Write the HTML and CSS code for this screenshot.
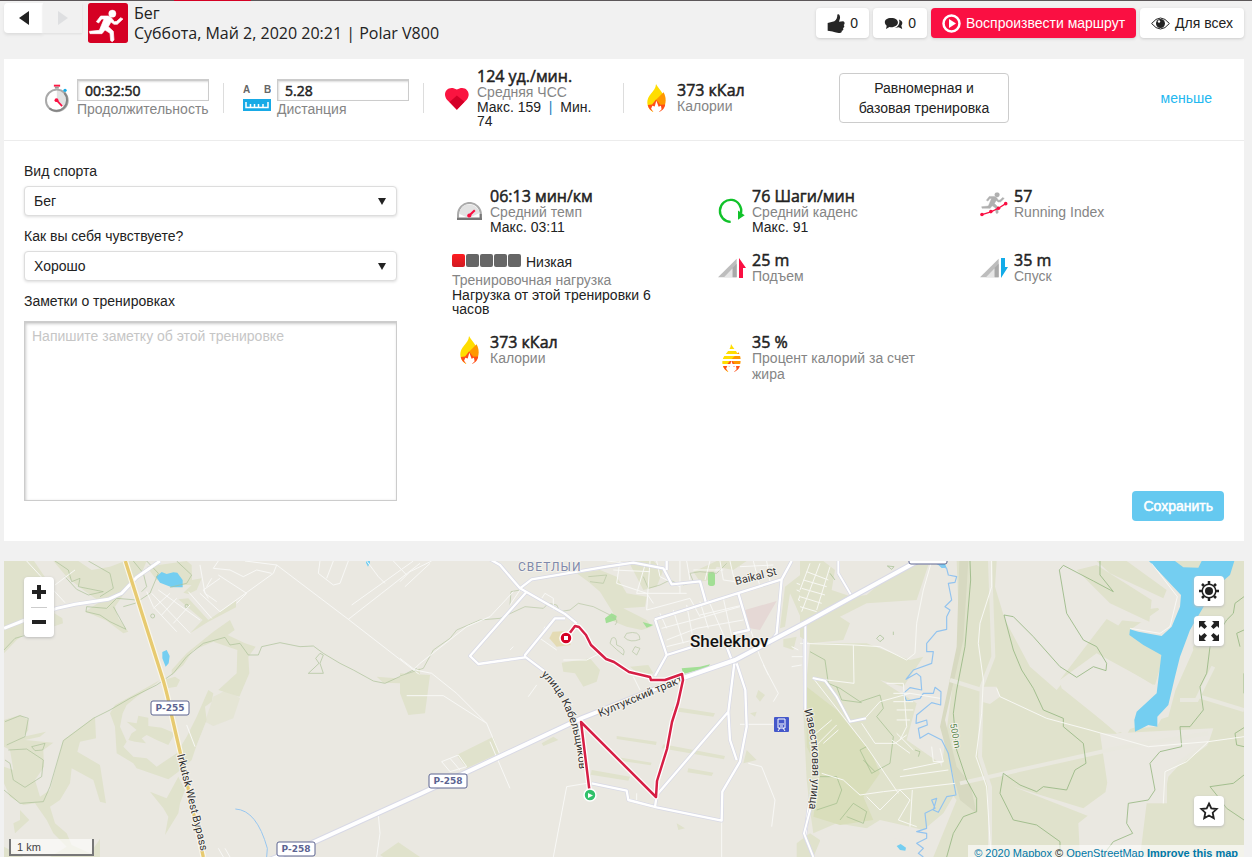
FILE: index.html
```html
<!DOCTYPE html>
<html lang="ru">
<head>
<meta charset="utf-8">
<meta name="viewport" content="width=device-width, initial-scale=1">
<title>Бег – Polar V800</title>
<link rel="stylesheet" href="styles.css">
</head>
<body>
<svg class="defs" aria-hidden="true">
  <symbol id="flame" viewBox="653 102 57 85">
    <path fill="#fd0" d="M680 102C688 117 706 130 704 150L686 170 670 187 662 180C649 165 652 145 664 132 673 122 679 115 680 102Z"/>
    <path fill="#ff9800" d="M703 127C713 145 711 168 698 180L680 187 672 170 680 150Z"/>
    <path fill="#ff4e17" d="M680 149L693 165 708 164C706 177 698 184 688 187H676C664 184 657 177 655 166L668 164Z"/>
    <path fill="#fff" d="M681 153L676 170 669 168 665 177 673 188H688L697 179 695 168 688 171Z"/>
  </symbol>
  <symbol id="slope" viewBox="835 234 57 58">
    <path fill="#bdbdbd" d="M835 291L891 235V291Z"/><path fill="#e6e6e6" d="M853 291L879 264V291Z"/><path fill="#a9a9a9" d="M879 262L891 250V291H879Z"/>
  </symbol>
  <symbol id="runner" viewBox="264 26 108 103">
    <circle cx="337" cy="41" r="11"/><path d="M302 48L325 48 334 53 343 65 350 64 362 53 369 57 352 73 342 73 333 66 325 80 340 94 342 120 337 125 332 122 330 100 315 90 306 101 270 101 268 94 298 91 312 57 305 57 296 69 289 65Z" stroke-width="2" stroke-linejoin="round"/>
  </symbol>
</svg>
<div class="page">
  <div class="topline"><span class="topline-active"></span></div>
  <header class="header">
    <div class="pager">
      <button class="pager-btn" aria-label="Назад"><svg width="10" height="14" viewBox="0 0 10 14"><path d="M10 0V14L0 7Z" fill="#222"/></svg></button>
      <button class="pager-btn pager-off" aria-label="Вперёд" disabled><svg width="10" height="14" viewBox="0 0 10 14"><path d="M0 0V14L10 7Z" fill="#dedfe1"/></svg></button>
    </div>
    <svg class="sport" viewBox="264 9 120 120" width="40" height="40"><rect x="264" y="9" width="120" height="120" rx="8" fill="#d50023"/><use href="#runner" x="264" y="26" width="108" height="103" fill="#fff" stroke="#fff"/></svg>
    <h1 class="title">Бег<br>Суббота, Май 2, 2020 20:21 | Polar V800</h1>
    <div class="actions">
      <button class="btn"><svg width="18" height="19" viewBox="82 42 54 57"><path fill="#262626" d="M84 69L104 64C111 58 113 53 113 44 118 39 122 47 121 55L118 65 130 64C136 65 136 73 132 75 136 80 133 84 130 84 133 90 129 93 126 92 128 98 122 99 117 99 105 98 100 94 94 94L84 92Z"/></svg>0</button>
      <button class="btn"><svg width="19" height="13" viewBox="254 51 56 36"><path fill="#262626" d="M275 53C288 53 295 59 295 66S288 80 274 80L270 79 260 85 262 76C251 66 257 53 275 53Z M298 57C308 60 311 68 305 76L308 85 297 80 286 82C297 77 302 68 298 57Z"/></svg>0</button>
      <button class="btn btn-red"><svg width="19" height="19" viewBox="0 0 19 19"><circle cx="9.500" cy="9.500" r="8" fill="none" stroke="#fff" stroke-width="2.500"/><path d="M7 5L14 9.500 7 14Z" fill="#fff"/></svg>Воспроизвести маршрут</button>
      <button class="btn"><svg width="19" height="13" viewBox="0 0 19 13"><path d="M.6 6.500Q9.500-4.500 18.400 6.500 9.500 17.500.6 6.500Z" fill="#fff" stroke="#222"/><circle cx="9.500" cy="6.500" r="4.500" fill="#222"/><circle cx="8" cy="4.500" r="1.200" fill="#fff"/></svg>Для всех</button>
    </div>
  </header>

  <main class="panel">
    <section class="summary">
      <div class="cell">
        <svg class="cell-icon" width="24" height="29" viewBox="135 250 73 88"><circle cx="171" cy="300" r="32" fill="#fff"/><path fill="#e2e2e2" d="M171 300V268A32 32 0 0 1 194 323Z"/><circle cx="171" cy="300" r="33" fill="none" stroke="#a9a9a9" stroke-width="6"/><path d="M194 277A33 33 0 0 1 148 324" fill="none" stroke="#858585" stroke-width="6"/><path fill="#ff1744" d="M162 252H181V258H162Z"/><path fill="#999" d="M165 258H177V264H165Z"/><circle cx="196" cy="269" r="5" fill="#13abe8"/><circle cx="170" cy="299" r="6" fill="#fa0f42"/><path d="M170 299L187 317" stroke="#fa0f42" stroke-width="5"/></svg>
        <div class="cell-body"><input class="metric-input" id="dur" value="00:32:50"><label class="label" for="dur">Продолжительность</label></div>
      </div>
      <div class="cell">
        <svg class="cell-icon" width="28" height="26" viewBox="0 0 28 26"><text x="0" y="8" class="ab">A</text><text x="21" y="8" class="ab">B</text><path fill="#18aae6" d="M0 14H28V26H0Z"/><path d="M3 17V22.500H25V17 M7.500 19V23 M11.500 19V23 M15.500 19V23 M20 19V23" fill="none" stroke="#fff" stroke-width="1.500"/></svg>
        <div class="cell-body"><input class="metric-input" id="dist" value="5.28"><label class="label" for="dist">Дистанция</label></div>
      </div>
      <div class="cell">
        <svg class="cell-icon" width="24" height="23" viewBox="45 110 73 68"><path fill="#fa1440" d="M81 178L51 148C34 126 56 101 81 117 106 101 128 126 111 148Z"/><path fill="#d40028" d="M81 135L104 154 81 178 59 155Z"/></svg>
        <div class="cell-body"><div class="value">124 уд./мин.</div><div class="label">Средняя ЧСС</div><div class="extra">Макс. 159 &nbsp;<span class="bar">|</span>&nbsp; Мин. 74</div></div>
      </div>
      <div class="cell">
        <svg class="cell-icon" width="19" height="28"><use href="#flame"/></svg>
        <div class="cell-body"><div class="value">373 кКал</div><div class="label">Калории</div></div>
      </div>
      <div class="benefit"><button class="outline-btn">Равномерная и базовая тренировка</button></div>
      <a class="less" href="#">меньше</a>
    </section>

    <section class="details">
      <form class="form">
        <label class="field-label" for="sport">Вид спорта</label>
        <div class="select-wrap"><select class="select" id="sport"><option>Бег</option></select></div>
        <label class="field-label" for="feel">Как вы себя чувствуете?</label>
        <div class="select-wrap"><select class="select" id="feel"><option>Хорошо</option></select></div>
        <label class="field-label" for="notes">Заметки о тренировках</label>
        <textarea class="notes" id="notes" placeholder="Напишите заметку об этой тренировке"></textarea>
      </form>
      <div class="side">
        <div class="stats">
          <div class="stat"><div class="stat-icon"><svg width="25" height="18" viewBox="54 66 73 52"><path fill="#fff" stroke="#aaa" stroke-width="6" d="M57 114V103A33 34 0 0 1 124 103V114Z"/><path fill="#e2e2e2" d="M90 114L60 100Q65 72 90 73 115 75 120 98L90 112Z"/><path stroke="#777" stroke-width="6" d="M54 115H127M123 114V101"/><path d="M86 109L106 90" stroke="#fa0f42" stroke-width="6"/><circle cx="90" cy="105" r="6" fill="#fa0f42"/></svg></div>
            <div><div class="value">06:13 мин/км</div><div class="label">Средний темп</div><div class="extra">Макс. 03:11</div></div></div>
          <div class="stat"><div class="stat-icon"><svg width="27" height="26" viewBox="838 55 81 77"><path fill="none" stroke="#11c22a" stroke-width="7" d="M876 126A32 33 0 1 1 907 100"/><path fill="#11c22a" d="M898 92L918 106 898 120Z"/></svg></div>
            <div><div class="value">76 Шаги/мин</div><div class="label">Средний каденс</div><div class="extra">Макс. 91</div></div></div>
          <div class="stat"><div class="stat-icon stat-icon-top"><svg width="28" height="26" viewBox="420 30 85 78"><use href="#runner" x="422" y="31" width="74" height="70" fill="#b0b0b0" stroke="#b0b0b0"/><path d="M426 101L453 93 476 82 498 68" fill="none" stroke="#fa0f42" stroke-width="4"/><g fill="#fa0f42"><circle cx="426" cy="101" r="5.500"/><circle cx="453" cy="92" r="5.500"/><circle cx="476" cy="82" r="5.500"/><circle cx="498" cy="68" r="5.500"/></g></svg></div>
            <div><div class="value">57</div><div class="label">Running Index</div></div></div>

          <div class="load"><div class="load-row"><span class="sq sq-on"></span><span class="sq"></span><span class="sq"></span><span class="sq"></span><span class="sq"></span><span class="load-text">Низкая</span></div><div class="label">Тренировочная нагрузка</div><div class="extra">Нагрузка от этой тренировки 6 часов</div></div>
          <div class="stat"><div class="stat-icon stat-icon-top"><svg width="28" height="20" viewBox="0 0 28 20"><use href="#slope" width="19" height="20"/><path fill="#fa0f42" d="M21 0L28 10H25V20H21Z"/></svg></div>
            <div><div class="value">25 m</div><div class="label">Подъем</div></div></div>
          <div class="stat"><div class="stat-icon stat-icon-top"><svg width="28" height="20" viewBox="0 0 28 20"><use href="#slope" width="19" height="20"/><path fill="#13abe8" d="M21 0H25V9H28L21 20Z"/></svg></div>
            <div><div class="value">35 m</div><div class="label">Спуск</div></div></div>

          <div class="stat"><div class="stat-icon stat-icon-top"><svg width="19" height="28"><use href="#flame"/></svg></div>
            <div><div class="value">373 кКал</div><div class="label">Калории</div></div></div>
          <div class="stat"><div class="stat-icon"><svg width="19" height="28" viewBox="0 0 19 28"><use href="#flame" width="19" height="28"/><path stroke="#fff" stroke-width="2" d="M0 6H21M0 11H21M0 16H21M0 21H21"/></svg></div>
            <div><div class="value">35 %</div><div class="label">Процент калорий за счет жира</div></div></div>
        </div>
        <button class="save">Сохранить</button>
      </div>
    </section>
  </main>

  <section class="map" aria-label="Карта маршрута">
    <svg class="map-canvas" viewBox="4 561 1240 300" preserveAspectRatio="xMinYMin slice">
      <rect x="4" y="561" width="3000" height="1000" fill="#eae8e1"/>

      <!-- western area -->
      <g transform="translate(0 550) scale(.33333)">
        <g fill="#e0e2cc">
          <path d="M12 33H102L135 82 160 125 163 190 187 205 189 220 150 233 90 240 50 270 12 310Z M12 150L25 205 12 220Z M160 33H235L275 60 330 50 375 33H440L420 80 380 120 345 170 355 205 385 245 370 250 320 212 280 195 255 185 300 155 250 120 200 80Z M440 50L560 33 575 45 576 90 605 85 590 120 565 132 550 128 575 105 520 105 470 90Z M535 148L565 145 625 210 690 165 708 152 708 172 625 215 570 250 608 210Z"/>
          <path d="M515 360L560 310 640 245 690 210 704 240 683 255 735 280 767 290 745 320 748 370 718 440 655 420 710 370 712 300 640 275 580 300 550 345 515 375Z"/>
          <path d="M330 490L345 465 400 435 480 390 470 400 410 440 380 465 368 490 360 530 380 575 370 590 400 620 440 625 470 650 530 610 560 560 590 500 625 420 640 430 635 455 615 470 620 510 590 585 575 630 535 665 505 688 410 655 400 640 350 610 345 530Z M380 515L410 520 415 497 445 503 445 528 485 533 525 550 505 585 470 570 440 555 425 565 438 580 405 575 385 570 395 550 410 540Z M525 380L540 390 530 410 500 415 490 390Z"/>
          <path d="M12 510L60 495 85 510 85 540 70 560 138 545 120 560 75 570 160 578 130 600 132 650 105 690 120 740 150 720 190 570 285 500 288 565 240 575 232 605 300 645 318 760 300 755 280 690 215 655 210 700 180 750 150 770 165 820 200 850 215 885 270 910 300 867 300 921H150L200 890 160 850 140 810 105 760 70 765 30 740 12 700V650L40 660 30 600 12 590Z M60 780L88 810 45 850 40 820 60 810Z M450 725L500 745 535 680 555 720 540 760 535 790 495 855 505 800 490 775Z M12 890L70 921H12Z M1130 380L1190 385 1260 355V490H1225L1200 400 1150 398Z M1140 915L1195 877 1260 921H1150Z"/>
          <path opacity=".55" d="M640 440L680 420 720 445 700 505 640 528 615 515Z"/>
        </g>
        <g fill="#74cef1"><path d="M468 80L485 66 500 72 520 67 532 68 548 90V112H515L480 98Z M487 306L500 300 509 318 506 340 497 350 487 325Z M1098 33H1110V38L1104 50 1098 38Z"/></g>
        <g fill="none" stroke="#a9bf96" stroke-width="2">
          <path d="M165 33L205 60 215 95 240 85 235 110 310 125 265 135 230 118 195 80 M265 33L330 70 340 115 300 140 M410 150L350 145 320 175 260 170 258 185 300 195 330 215 378 238 340 170 M400 33L430 70 440 110 425 125 M440 33L475 70 450 130 405 160 370 170 M530 33L575 75 560 100 510 112"/>
          <path d="M12 720L60 760 130 755 150 710 190 572 280 505 330 480 390 445 470 405 520 370 560 320 610 280 675 262 690 285 720 280 745 315H775L785 290 840 278 900 290 940 288 970 310 1020 340 1060 360 1120 393 1155 400 1210 375 1250 355"/>
          <path d="M960 310L947 325 957 340 925 370H970L960 340 970 315Z M15 515L60 497 85 505 75 560 20 585 M25 600L80 597 130 630 125 680 75 712 40 690 30 640 15 630 M95 590L135 580 128 600 105 602Z M12 300L45 265 80 255"/>
          <circle cx="458" cy="198" r="6"/><circle cx="560" cy="168" r="5"/>
        </g>
        <path d="M706 777Q770 780 802 895L800 921" fill="none" stroke="#97c6f0" stroke-width="3"/>
        <g fill="none" stroke="#f8f8f6" stroke-width="3">
          <path d="M80 33L195 158 M165 105L225 60 M735 33L830 45 1045 208 1260 375 M830 45L820 70 660 185 M600 45L615 130 650 155 M655 33L640 55 690 60 730 80 770 60 815 70 M635 85L620 110 M655 75L740 130 710 160 M600 130L660 185 M565 125L635 205 M660 85L610 120 625 145 M1055 165L1240 33 M1045 208L1145 130 1260 40 M960 33L955 70 1000 105 1020 100 1045 33 M1000 33L980 85 M1100 33L1135 80 1155 100 M1180 33L1220 75"/>
          <path d="M440 125L460 170 530 245 M455 130L570 250 M475 120L600 210 M510 130L460 175 M530 145L485 195 M570 165L520 220 M560 525L585 590 M655 895L670 921 M675 895L690 921 M1135 795L1140 850 1130 921 M1220 438H1260"/>
        </g>
        <path d="M12 235L75 210 170 175 225 163 325 148 365 130 410 82 480 33" fill="none" stroke="#d8d9e4" stroke-width="13"/>
        <path d="M12 235L75 210 170 175 225 163 325 148 365 130 410 82 480 33" fill="none" stroke="#fff" stroke-width="9"/>
        <path d="M376 33L490 392Q505 445 510 475L540 605 L610 921" fill="none" stroke="#faf7ea" stroke-width="17"/>
        <path d="M376 33L490 392Q505 445 510 475L540 605 L610 921" fill="none" stroke="#e7ca70" stroke-width="10"/>
      </g>

      <!-- town -->
      <g transform="translate(400 550) scale(.33333)">
        <g fill="#e0e2cc">
          <path d="M0 370L90 375 75 490 25 495 0 430Z M530 70L600 60 650 80 680 130 740 140 735 170 670 175 740 210 755 230 725 240 680 230 630 210 640 190 600 125 565 95Z M685 33H760L790 60 770 110 730 120Z M950 33L1040 33 1000 60 950 50 930 90 900 95 880 65Z M1220 60L1260 33V240L1210 220 1170 130 1155 230 1140 235 1155 110Z M485 338L570 325 600 360 590 395 550 410 525 370 490 365Z M690 350L745 345 760 370 720 375Z M170 615L280 560 298 610 200 655Z M425 580L460 560 475 570 430 588Z"/>
          <path d="M650 558L770 575 768 585 650 567Z M820 470L945 490 940 500 815 482Z M790 583L975 618 972 628 785 595Z M655 622L755 638 752 646 648 630Z M575 660L690 680 685 692 572 674Z M865 655L940 668 935 678 862 667Z M1075 420L1095 435 1080 455 1068 440Z M1040 600L1070 630 1030 640Z M830 820L855 835 835 840Z M1190 880L1230 850 1260 870V921H1190Z M0 880L25 921H0Z M1050 490L1070 485 1065 500Z M1150 268L1190 260 1180 300 1150 290Z"/>
        </g>
        <path fill="#e5d8d5" d="M1035 180L1130 153 1080 240 1050 235Z"/><path fill="#e4dbb4" d="M458 245L500 243 512 285 470 290 448 265Z"/>
        <path fill="#a2df95" d="M615 205L635 190 650 198 648 210 618 220Z M845 355L900 350 930 343 925 352 850 372Z M728 216L760 225 740 233Z"/><rect x="924" y="66" width="21" height="42" rx="8" fill="#a2df95"/>
        <g fill="none" stroke="#b5c5a2" stroke-width="2">
          <path d="M0 378L70 355 100 300 150 265 170 240 240 210 300 205 375 170 430 175 445 160 470 165 480 185 510 180 535 160 580 170 630 195 M360 120L333 125 330 165 M565 80L620 75 610 100 570 95 M730 80L745 115 780 105 810 90 840 105 M850 105L880 95 870 70 900 65 950 70 980 40 M680 250Q720 240 720 268 690 280 673 262Z M635 265Q650 255 650 285 680 295 670 315 650 300 630 280Z M705 290L720 295 710 315 697 305Z M635 200Q660 210 645 225"/>
        </g>
        <g fill="none" stroke="#f8f8f6" stroke-width="3">
          <path d="M0 325L45 360 95 370 170 430 260 520 298 610 M20 437H130L260 520 M40 360L60 340 200 230 270 200 340 125 M0 95L30 65 95 33 M15 110L90 40 M330 165L360 120 375 130 M425 145L435 130 460 145 460 180 M435 230L420 265 470 300 M490 330H560L600 310 M385 440L410 405 M330 300L340 290 M125 635L175 615 200 650 150 665Z M150 625L180 660 M270 575L330 715 M460 921L500 710 560 700 M965 815V921 M700 380L720 420 M710 730V755 M1045 640L1085 650 1125 750 1115 830 M1020 523H1120 M1050 235L1080 320 1105 375 M1090 345L1135 430 1120 455 M1175 290L1195 300 M1175 320H1210 M1175 350L1205 345 M1235 375L1260 390"/>
          <path d="M620 33L735 45 710 130 860 130 M640 60L750 65 M660 33L650 100 740 130 760 160 M750 33L740 180 760 175 870 145 900 200 M770 33L780 80 840 110 M840 33V130 M860 33L870 90 M880 60H970 M930 33L915 90 M960 33L970 90 1040 100 M990 33L1005 100 M1020 50L1120 45 M1060 33L1080 110 M1100 33L1110 95 M780 190L800 235 M820 180L850 280 M860 165L880 270 M900 155L925 235 M925 150L990 300 M970 145L1000 280 M785 235L880 210 1020 170 M800 270L890 235 1030 210 M800 290L880 270 M900 195L1030 165"/>
          <path d="M1200 70L1260 100 M1190 100L1260 125 M1190 120L1260 150 M1195 150L1260 175 M1235 50L1195 150 M1260 50L1210 190 M1225 80L1250 120"/>
        </g>
        <g fill="none" stroke-linejoin="round">
          <path stroke="#d8d9e6" stroke-width="11" d="M270 28L300 45 360 115 495 192 530 220 M360 115L395 88 620 50 700 38 790 55 815 103 900 94 917 155 M380 125L210 318 235 342 375 322 375 315 465 205H495 M375 320L435 365 M765 208L1145 88 1175 33 M765 208L800 315 765 378 M800 315L880 290 M1145 88L1130 250 1105 285 M1015 130L1047 240 1000 250 M980 290L995 330 M1010 340L1036 420 1040 530 1020 635 967 725 965 812 770 772 685 750 680 722 575 700 M765 772L770 735 985 485 M1003 340L985 485 990 570 1010 630 M800 28V60 M1213 220L1215 470 1235 700 1215 860 1240 921"/>
          <path stroke="#fff" stroke-width="7" d="M270 28L300 45 360 115 495 192 530 220 M360 115L395 88 620 50 700 38 790 55 815 103 900 94 917 155 M380 125L210 318 235 342 375 322 375 315 465 205H495 M375 320L435 365 M765 208L1145 88 1175 33 M765 208L800 315 765 378 M800 315L880 290 M1145 88L1130 250 1105 285 M1015 130L1047 240 1000 250 M980 290L995 330 M1010 340L1036 420 1040 530 1020 635 967 725 965 812 770 772 685 750 680 722 575 700 M765 772L770 735 985 485 M1003 340L985 485 990 570 1010 630 M800 28V60 M1213 220L1215 470 1235 700 1215 860 1240 921"/>
        </g>
      </g>

      <!-- river and eastern hills -->
      <g transform="translate(800 480) scale(.33333)">
        <path fill="#e0e2cc" d="M0 243H70L105 270 95 330 155 350 200 345 240 310 330 255H385L350 360 200 370 120 410 150 430 130 480 30 490 0 470Z M470 243H790L830 320 840 360 920 417 778 600 785 625 935 745 980 765 1060 620 930 550 895 520 985 395 1100 380 1145 330 1050 243H1332V1131H400L470 960 420 900 460 600 480 510Z"/>
        <path fill="#e0e2cc" d="M30 490L200 490 330 540 370 530 310 620 240 600 350 670 320 780 420 850 465 940 430 1000 370 1050 330 1040 240 1020 200 1045 110 1030 40 1060 30 990 20 900 10 700Z"/>
        <path fill="#d9debb" d="M20 620L110 690 215 820 240 880 190 950 220 1020 120 1035 40 1010 60 880 20 800Z"/>
        <path fill="#d7d9c1" d="M478 243H505L490 480 435 720 470 860 510 910 530 1000 480 960 420 740 470 500Z"/>
        <path fill="#eae8e1" d="M590 243H890L930 270 1050 345 1050 430 925 417 820 560 790 605 770 630 690 560 615 420 585 320Z M785 615L925 430 895 515 1060 615 1080 520 1060 490 990 450 1105 370 1145 340 1180 380 1190 480 1140 580 1105 710 950 760Z M1050 340L1145 340 1180 510 1100 690 1070 740 1010 745 1070 640 1075 530 990 470 1100 430Z M950 760L1240 745 1225 790 1160 830 1105 890 1090 970 1040 970 1020 1131H840L835 1030 910 970Z M900 760L1020 765 985 840 950 960 870 1010 640 920 850 985 925 930Z M70 1060L200 1045 300 1080 370 1060 340 1131H40Z M545 620H590L600 650 570 672 545 665Z"/>
        <path fill="#e0e2cc" d="M920 417L1095 515 1065 615 890 520 780 600Z M890 243H980L1100 330 1090 355 930 280Z M830 270L890 255 1055 360 1048 425 930 370Z"/>
        <g fill="none" stroke="#e9e8df" stroke-width="12"><path d="M570 243L580 530 545 620 540 830 570 921V1131 M450 600L545 630 M480 910L950 805 1225 760 M1095 970V880L1220 790 M1240 560L1190 660H1140 M1200 650L1332 690"/></g>
        <path fill="#74cef1" d="M1047 243H1125L1150 262 1195 263 1205 243H1303L1290 285 1255 315 1212 378 1170 450 1140 530 1125 590 1105 675 1072 710V740L1045 735 1005 755 1003 720 1010 695 1070 640 1084 525 1030 495 988 465 990 448 1015 455 1085 468 1115 440 1140 380 1143 345Z"/><path fill="#74cef1" d="M290 1098L302 1092 318 1103 316 1112 300 1110Z M410 250L435 252 440 263 425 264Z"/>
        <path fill="none" stroke="#fff" stroke-width="2" d="M1055 250L1132 350 1110 440 1080 460 990 445"/>
        <g fill="none" stroke="#96b782" stroke-width="2.500">
          <path d="M510 243L512 300 495 500 470 630 460 700 470 810 500 900 530 955V995L490 1010 460 1060 440 1131 M612 405L640 410 700 470 780 560 830 592 880 560 918 572 920 550 890 500 850 480 800 400 778 270 790 256 880 303 940 335 900 285V243 M612 405L640 510 665 570 700 625 730 690 790 715 790 740 850 790 858 850 825 870 800 930 730 920 710 935 660 915 610 880 600 940 640 1020 710 1035 780 1085V1131"/>
          <path d="M1332 350L1305 370 1300 400 1280 420 1230 500 1220 580 1200 620 1210 690 1170 740 1140 740 1145 800 1080 815 1050 850 1065 930 1045 960 985 970 980 1030 998 1060 940 1085 905 1131 M1332 885L1300 910 1230 920 1250 945 1280 985 1332 1020 M1332 450L1310 460 1320 500 M1332 580V640 M1332 743L1305 760 1310 795 1332 800"/>
          <path opacity=".7" d="M30 515L75 540 85 610 120 625 180 665 240 645 250 685 230 710 280 770 270 850 215 880 180 810 200 800 M110 620L125 660 185 668 M60 890L110 890 125 930 110 970 50 990 M120 1020L160 970 200 995 190 1030 140 1010 M90 280L105 300 M262 258L282 260 275 268Z M240 465L252 475 240 485 230 475Z M280 455V465 M190 840L225 875 M345 810L360 815 355 830"/>
        </g>
        <path fill="none" stroke="#92c3ef" stroke-width="3.500" stroke-linejoin="round" d="M405 248L440 265 445 285 470 290 465 307 445 310 455 360 435 380 450 390 440 410V448L410 455 380 490 380 515 400 515 395 550 340 570 318 598 350 580 362 590 365 630 330 623 310 640 320 663 360 655 370 640 400 640 405 622 423 635 422 675 395 668 350 705 348 730 380 720 382 735 355 745 360 775 385 760 425 780 445 820 468 945 440 950 415 997 400 990 410 955 395 960 405 985 375 1000 380 1045 350 1055 380 1060V1075L350 1090 370 1105 355 1120 370 1131"/>
        <g fill="none" stroke="#f8f8f4" stroke-width="3">
          <path d="M0 490L160 495 240 500 320 540 345 520 350 430 370 330 395 243 M160 495L162 610 40 595 200 800 295 940 M195 715L240 665 330 640 420 655 M185 730L225 790 285 790 320 765 M65 880L130 900 180 945 250 935 465 910 M310 870L430 845 M300 890L445 870 M240 990L300 930 330 960 295 1020 350 1040 M240 990L200 950 M260 610H310L320 740 300 780 M280 640H330 M280 665H340 M290 690H340 M290 720H330 M275 780L330 820 M290 760L340 810 M395 800L400 845H430 M420 805L430 845 M50 795L110 735 M70 790L115 750 M30 775L95 720 M575 243V320L540 430 535 490 550 600 545 700 528 830 560 921 573 1131 M590 625L600 650 740 715 870 750 1045 800 1225 785 1332 770 M1090 970L1095 875 1160 845 1225 785 M337 930L330 1040"/>
          <path d="M30 250L0 330 M60 250L5 395 M90 260L50 390 M20 275L85 300 M10 300L80 320 M5 325L75 345 M0 350L65 370 M0 380L50 395"/>
        </g>
        <path d="M115 243V280L155 348 M38 594L75 602 110 650 150 725 198 715 M16 430V690 M38 960L12 1060 40 1131" fill="none" stroke="#d8d9e6" stroke-width="10"/>
        <path d="M115 243V280L155 348 M38 594L75 602 110 650 150 725 198 715 M16 430V690 M38 960L12 1060 40 1131" fill="none" stroke="#fff" stroke-width="6"/>
      </g>

      <g fill="none" stroke-linejoin="round">
        <path stroke="#d8d9e6" stroke-width="6" d="M267 861L312 843 420 794 582 718 683 678 735 660 805 623 852 597 914 563 927 556"/>
        <path stroke="#fff" stroke-width="4" d="M267 861L312 843 420 794 582 718 683 678 735 660 805 623 852 597 914 563 927 556"/>
      </g>
      <g class="shield"><rect x="151" y="701" width="38" height="14" rx="2"/><rect x="277" y="842" width="38" height="14" rx="2"/><rect x="429" y="774" width="38" height="14" rx="2"/><rect x="909" y="550" width="38" height="14" rx="2"/><text x="170" y="711">P-255</text><text x="296" y="852">P-258</text><text x="448" y="784">P-258</text></g>

      <path id="p-bypass" d="M177 755L203 860" fill="none"/><path id="p-kabel" d="M541 675Q577 708 580 780" fill="none"/><path id="p-trakt" d="M600 717L690 679" fill="none"/><path id="p-izv" d="M804 710Q818 755 808 815" fill="none"/><path id="p-500" d="M950 724L956 755" fill="none"/>
      <g class="map-label">
        <text><textPath href="#p-bypass">Irkutsk West Bypass</textPath></text>
        <text><textPath href="#p-kabel">улица Кабельщиков</textPath></text>
        <text><textPath href="#p-trakt">Култукский тракт</textPath></text>
        <text><textPath href="#p-izv">Известковая улица</textPath></text>
        <text transform="translate(736 585) rotate(-14)">Baikal St</text>
        <text class="elevation"><textPath href="#p-500">500 m</textPath></text>
        <text class="town" x="690" y="647">Shelekhov</text>
        <text class="suburb" x="518" y="571">СВЕТЛЫЙ</text>
      </g>
      <rect x="774" y="717" width="15" height="15" rx="1" fill="#4558ca"/><path d="M778 719H785V728H778Z M780 728L778 731 M783 728L785 731 M779 724H784 M780 726H783" fill="none" stroke="#fff"/>

      <g fill="none" stroke-linejoin="round" stroke-linecap="round"><path stroke="#fff" stroke-width="5" d="M590 795L581 722 656 797 657 781 667 749 672 722 678 703 683 680 682 674 665 680H651L650 677 629 672 614 662 606 659 591 645 586 635 579 627 575 626 566 638"/><path stroke="#d61f45" stroke-width="2.500" d="M590 795L581 722 656 797 657 781 667 749 672 722 678 703 683 680 682 674 665 680H651L650 677 629 672 614 662 606 659 591 645 586 635 579 627 575 626 566 638"/></g>
      <circle cx="566" cy="638" r="6" fill="#d50023" stroke="#fff" stroke-width="1.500"/><rect x="564" y="636" width="4" height="4" fill="#fff"/>
      <circle cx="590" cy="795" r="6" fill="#31c16a" stroke="#fff" stroke-width="1.500"/><path d="M588 793V798L593 795.500Z" fill="#fff"/>
    </svg>

    <div class="zoom">
      <button class="zoom-btn" aria-label="Приблизить"><svg width="14" height="14" viewBox="0 0 14 14"><path d="M7 0V14M0 7H14" stroke="#222" stroke-width="4"/></svg></button>
      <button class="zoom-btn zoom-out" aria-label="Отдалить"><svg width="14" height="4" viewBox="0 0 14 4"><path d="M0 2H14" stroke="#222" stroke-width="4"/></svg></button>
    </div>
    <div class="tools">
      <button class="tool" aria-label="Настройки"><svg width="20" height="20" viewBox="0 0 20 20"><circle cx="10" cy="10" r="6.800" fill="none" stroke="#222" stroke-width="1.500"/><circle cx="10" cy="10" r="4" fill="#222"/><path d="M10 0V3M10 17V20M0 10H3M17 10H20M3 3L5 5M15 15L17 17M3 17L5 15M15 5L17 3" stroke="#222" stroke-width="2.500"/></svg></button>
      <button class="tool" aria-label="Во весь экран"><svg width="20" height="20" viewBox="0 0 20 20"><path fill="#222" d="M0 0H7L5 2 8 5.500 5.500 8 2 5 0 7ZM20 0V7L18 5 14.500 8 12 5.500 15 2 13 0ZM0 20V13L2 15 5.500 12 8 14.500 5 18 7 20ZM20 20H13L15 18 12 14.500 14.500 12 18 15 20 13Z"/></svg></button>
    </div>
    <button class="tool star" aria-label="Избранное"><svg width="20" height="20" viewBox="0 0 20 20"><path fill="none" stroke="#222" stroke-width="1.800" d="M10 2.500L12.300 7.400 17.700 8 13.700 11.700 14.800 17.200 10 14.500 5.200 17.200 6.300 11.700 2.300 8 7.700 7.400Z"/></svg></button>
    <div class="scale">1 km</div>
    <div class="credits"><a href="#">© 2020 Mapbox</a> © <a href="#">OpenStreetMap</a> <a href="#"><b>Improve this map</b></a></div>
  </section>
</div>
</body>
</html>
```
FILE: styles.css
```css
* { box-sizing: border-box; }
body {
  margin: 0;
  background: #f1f1f1;
  color: #222;
  font: 14px/16px "Liberation Sans", Arial, sans-serif;
}
button, input, select, textarea { font: inherit; color: inherit; margin: 0; }
button { cursor: pointer; border: 0; }
svg { display: block; flex: none; }
.defs { position: absolute; width: 0; height: 0; }
.page { display: flex; flex-direction: column; height: 100vh; min-width: 1100px; overflow: hidden; }

.topline { flex: none; height: 1px; background: #5c5759; }
.topline-active { display: block; width: 77px; height: 1px; margin-left: 174px; background: #d50023; }

.header { display: flex; flex: none; align-items: flex-start; height: 58px; padding: 2px 8px 0 4px; }
.pager { display: flex; margin-right: 6px; }
.pager-btn {
  display: flex; align-items: center; justify-content: center;
  width: 39px; height: 30px; padding: 0;
  background: #fff; border-radius: 4px 0 0 4px; box-shadow: 0 2px 3px #ddd;
}
.pager-off { background: #f1f1f1; border-radius: 0; box-shadow: 0 1px 2px #ddd; }
.title { margin: 0 0 0 6px; font: 400 16px/20px "Open Sans", "Noto Sans", sans-serif; }
.actions { display: flex; gap: 4px; margin: 5px 0 0 auto; }
.btn {
  display: flex; align-items: center; gap: 5px;
  height: 30px; padding: 0 11px;
  background: #fff; border-radius: 4px; box-shadow: 0 1px 3px #ccc; white-space: nowrap;
}
.btn-red { background: #fa0f42; color: #fff; }

.panel { flex: none; margin: 0 8px 20px 4px; background: #fff; }
.summary { display: flex; align-items: center; min-height: 82px; padding: 0 20px 3px; border-bottom: 1px solid #ececec; }
.cell { position: relative; display: flex; flex: none; align-items: center; width: 200px; padding-left: 18px; }
.cell-icon { margin: 0 auto; }
.cell-body { width: 147px; margin-left: 6px; padding-right: 15px; }
.cell:nth-child(-n+3)::after { content: ""; position: absolute; right: 0; top: 50%; height: 30px; margin-top: -15px; border-right: 1px solid #ddd; }
.metric-input {
  display: block; width: 132px; height: 22px; padding: 0 7px;
  border: 1px solid #ccc; border-top-width: 2px; border-radius: 0; background: #fff;
  box-shadow: inset 1px 1px 2px #ddd;
  font: 400 14px/18px "Open Sans", "Noto Sans", sans-serif;
  -webkit-text-stroke: 0.5px #222;
}
.ab { font: 700 10px "Liberation Sans", Arial, sans-serif; fill: #666; }
.value { font: 400 16px/16px "Open Sans", "Noto Sans", sans-serif; -webkit-text-stroke: 0.5px #222; }
.label { display: block; color: #858585; }
.extra { line-height: 14px; }
.bar { color: #1c7fc0; }
.benefit { flex: 1; padding-left: 15px; }
.outline-btn { width: 170px; height: 50px; padding: 0 10px; background: #fff; border: 1px solid #ccc; border-radius: 4px; line-height: 20px; }
.less { padding-right: 12px; color: #24b8f0; text-decoration: none; }

.details { display: flex; gap: 55px; padding: 20px; }
.form { flex: none; width: 373px; margin-bottom: 20px; }
.field-label { display: block; margin-bottom: 5px; line-height: 20px; }
.select-wrap { position: relative; margin-bottom: 10px; }
.select-wrap::after { content: ""; position: absolute; right: 11px; top: 12px; border: solid transparent; border-width: 7px 4px 0; border-top-color: #222; pointer-events: none; }
.select {
  display: block; width: 100%; height: 30px; padding: 0 9px; appearance: none;
  background: #fff; border: 1px solid #ddd; border-radius: 4px; box-shadow: 0 1px 3px #ddd;
}
.notes {
  display: block; width: 100%; height: 180px; margin-top: 10px; padding: 5px 7px; resize: none;
  border: 1px solid #ccc; border-top-width: 2px; border-radius: 0; box-shadow: inset 1px 1px 3px #ccc;
}
.notes::placeholder { color: #c6c6c6; }

.side { display: flex; flex: 1; flex-direction: column; justify-content: space-between; }
.stats { display: grid; grid-template-columns: 262fr 262fr 248fr; row-gap: 18px; padding-top: 27px; }
.stat { display: flex; padding-right: 40px; }
.stat-icon { display: flex; flex: none; justify-content: center; align-items: center; width: 38px; max-height: 48px; padding-right: 3px; }
.stat-icon-top { max-height: 32px; }
.load { padding-right: 40px; }
.load-row { display: flex; align-items: center; gap: 1px; height: 20px; }
.sq { width: 13px; height: 13px; margin-bottom: 3px; background: #666; border-radius: 2px; }
.sq-on { background: linear-gradient(#ff1c20, #cf1a22); }
.load-text { margin-left: 4px; }
.save { align-self: flex-end; height: 30px; padding: 0 11px; background: #65c9f0; border-radius: 4px; color: #fff; -webkit-text-stroke: 0.5px #fff; }

.map { position: relative; flex: 1 0 300px; margin: 0 8px 0 4px; overflow: hidden; background: #eae8e1; }
.map-canvas { width: 100%; height: 100%; }
.shield rect { fill: #fff; stroke: #5c6491; }
.shield text { font: 700 9px "DejaVu Sans", sans-serif; fill: #5c6491; text-anchor: middle; }
.map-label { font: 11px Roboto, "Noto Sans", sans-serif; fill: #333; stroke: #f4f2ec; stroke-width: 2px; paint-order: stroke; }
.map-label .elevation { font-size: 9px; fill: #55844a; }
.map-label .town { font-size: 17px; font-weight: 500; fill: #111; }
.map-label .suburb { font-size: 12px; letter-spacing: 1px; fill: #7f89ab; }

.zoom { position: absolute; left: 20px; top: 16px; background: #fff; border-radius: 4px; box-shadow: 0 1px 3px #bbb; }
.zoom-btn { display: flex; align-items: center; justify-content: center; width: 30px; height: 30px; padding: 0; background: none; }
.zoom-out { position: relative; }
.zoom-out::before { content: ""; position: absolute; top: 0; left: 7px; right: 7px; border-top: 1px solid #ccc; }
.tools { position: absolute; top: 15px; right: 20px; display: grid; gap: 10px; }
.tool { display: flex; align-items: center; justify-content: center; width: 30px; height: 30px; padding: 0; background: #fff; border-radius: 4px; box-shadow: 0 1px 3px #bbb; }
.star { position: absolute; right: 20px; top: 235px; }
.scale { position: absolute; left: 5px; top: 278px; width: 85px; height: 17px; padding-left: 6px; border: 2px solid #777; border-top: 0; background: rgba(255, 255, 255, .6); color: #444; font-size: 11px; }
.credits { position: absolute; right: 0; top: 284px; padding: 0 6px; background: rgba(255, 255, 255, .6); font-size: 11px; line-height: 17px; white-space: nowrap; }
.credits a { color: #0078a8; text-decoration: none; }
```
